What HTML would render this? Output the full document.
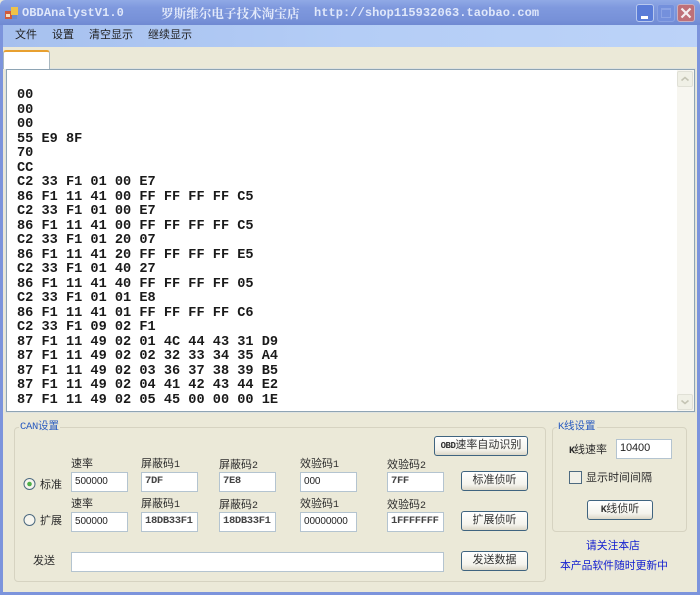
<!DOCTYPE html>
<html><head><meta charset="utf-8">
<style>
html,body{margin:0;padding:0;width:700px;height:595px;overflow:hidden;background:#ebe9d8}
body{position:relative;font-family:"Liberation Sans","Noto Sans CJK SC",sans-serif;font-size:12px;color:#222}
.a{position:absolute;white-space:nowrap}
.lb{position:absolute;white-space:nowrap;font-size:11px;line-height:14px;color:#2c2c2c;margin-top:1px}
.lb b{font-weight:normal;font-size:10px;font-family:"Liberation Mono",monospace}
.in{position:absolute;box-sizing:border-box;background:#fff;border:1px solid #b4c4d0;height:20px;font:bold 10.5px/17px "Liberation Mono",monospace;color:#444;padding-left:3px;letter-spacing:-.35px}
.in.n{font:normal 10px/17px "Liberation Sans",sans-serif;letter-spacing:-.1px;color:#222;padding-left:3px}
.btn{position:absolute;box-sizing:border-box;height:20px;width:67px;border:1px solid #3f6480;border-radius:3px;background:linear-gradient(#fff,#f4f3ec 70%,#dcd8c8);text-align:center;font-size:11px;line-height:17px;color:#333;white-space:nowrap}
.btn b{font:bold 9px "Liberation Mono",monospace;letter-spacing:-.5px}
.gb{position:absolute;box-sizing:border-box;border:1px solid #d6d3c1;border-radius:4px}
.gt{position:absolute;background:#ebe9d8;color:#2a5cc0;font-size:10.5px;line-height:14px;padding:0 1px;white-space:nowrap}
.gt b{font:normal 10.5px "Liberation Mono",monospace;letter-spacing:-.3px}
.out{position:absolute;left:17px;top:89px;font:bold 13.6px/14.52px "Liberation Mono",monospace;color:#1a1a1a;white-space:pre;margin:0}
</style></head><body>
<!-- title bar -->
<div class="a" style="left:0;top:0;width:700px;height:25px;background:linear-gradient(#90a9e6,#7f99de 30%,#7791d8 80%,#6f89d2);border-radius:5px 5px 0 0"></div>
<svg class="a" style="left:5px;top:6px" width="14" height="15"><rect x="0" y="5" width="7" height="8" fill="#cf5a3c"/><rect x="6" y="1" width="7" height="8" fill="#eec24a"/><rect x="1" y="8" width="4" height="3" fill="#f5e0c0"/><rect x="7" y="9" width="5" height="4" fill="#6a8ad0"/></svg>
<div class="a" style="left:22px;top:6px;font:bold 12px/14px 'Liberation Mono',monospace;color:#dfe7fa;letter-spacing:.08px">OBDAnalystV1.0</div>
<div class="a" style="left:161px;top:5px;font-size:12.6px;line-height:16px;font-weight:bold;color:#e2e9fa;font-family:'Noto Serif CJK SC','Noto Sans CJK SC',serif">罗斯维尔电子技术淘宝店</div>
<div class="a" style="left:314px;top:6px;font:bold 12px/14px 'Liberation Mono',monospace;color:#dfe7fa;letter-spacing:.06px">http://shop115932063.taobao.com</div>
<div class="a" style="left:636px;top:4px;width:18px;height:18px;box-sizing:border-box;background:#5a7cd8;border:1px solid #b8c8ee;border-radius:3px"><div class="a" style="left:4px;top:11px;width:7px;height:3px;background:#fff"></div></div>
<div class="a" style="left:657px;top:4px;width:18px;height:18px;box-sizing:border-box;background:#7490dc;border:1px solid #8aa2e2;border-radius:3px"><div class="a" style="left:3px;top:3px;width:10px;height:10px;box-sizing:border-box;border:1px solid #8ba3e4;border-top-width:2px"></div></div>
<div class="a" style="left:677px;top:4px;width:18px;height:18px;box-sizing:border-box;background:#bf7078;border:1px solid #c8b0c0;border-radius:3px"><svg width="16" height="16" style="display:block"><path d="M3.5 3.5L12.5 12.5M12.5 3.5L3.5 12.5" stroke="#f4eef0" stroke-width="2.2"/></svg></div>
<!-- menu -->
<div class="a" style="left:0;top:25px;width:700px;height:22px;background:linear-gradient(90deg,#a6c0ee,#b4cdf6 50%,#bcd3f8)"></div>
<div class="a" style="left:15px;top:28px;font-size:11px;line-height:15px;color:#222">文件</div>
<div class="a" style="left:52px;top:28px;font-size:11px;line-height:15px;color:#222">设置</div>
<div class="a" style="left:89px;top:28px;font-size:11px;line-height:15px;color:#222">清空显示</div>
<div class="a" style="left:148px;top:28px;font-size:11px;line-height:15px;color:#222">继续显示</div>
<!-- tab -->
<div class="a" style="left:3px;top:50px;width:47px;height:19px;box-sizing:border-box;background:#fff;border:1px solid #a9b8c0;border-bottom:0;border-top:2px solid #e8a030;border-radius:3px 3px 0 0;z-index:2"></div>
<!-- text area -->
<div class="a" style="left:6px;top:69px;width:689px;height:343px;box-sizing:border-box;background:#fff;border:1px solid #8ea4b4;box-shadow:0 0 0 1px #dfe3e0"></div>
<pre class="out">00
00
00
55 E9 8F
70
CC
C2 33 F1 01 00 E7
86 F1 11 41 00 FF FF FF FF C5
C2 33 F1 01 00 E7
86 F1 11 41 00 FF FF FF FF C5
C2 33 F1 01 20 07
86 F1 11 41 20 FF FF FF FF E5
C2 33 F1 01 40 27
86 F1 11 41 40 FF FF FF FF 05
C2 33 F1 01 01 E8
86 F1 11 41 01 FF FF FF FF C6
C2 33 F1 09 02 F1
87 F1 11 49 02 01 4C 44 43 31 D9
87 F1 11 49 02 02 32 33 34 35 A4
87 F1 11 49 02 03 36 37 38 39 B5
87 F1 11 49 02 04 41 42 43 44 E2
87 F1 11 49 02 05 45 00 00 00 1E</pre>
<!-- scrollbar -->
<div class="a" style="left:677px;top:70px;width:17px;height:341px;background:#f7f6f0"></div>
<div class="a" style="left:677px;top:71px;width:16px;height:16px;box-sizing:border-box;background:#f0f0e6;border:1px solid #e0e0d6;border-radius:2px"><svg width="14" height="14" style="display:block"><path d="M3.5 8.5L7 5.5L10.5 8.5" fill="none" stroke="#c4c4b4" stroke-width="1.6"/></svg></div>
<div class="a" style="left:677px;top:394px;width:16px;height:16px;box-sizing:border-box;background:#f0f0e6;border:1px solid #e0e0d6;border-radius:2px"><svg width="14" height="14" style="display:block"><path d="M3.5 5.5L7 8.5L10.5 5.5" fill="none" stroke="#c4c4b4" stroke-width="1.6"/></svg></div>
<!-- window borders -->
<div class="a" style="left:0;top:25px;width:3px;height:570px;background:#7c94dc"></div>
<div class="a" style="left:697px;top:25px;width:3px;height:570px;background:#7c94dc"></div>
<div class="a" style="left:0;top:592px;width:700px;height:3px;background:#7c94dc"></div>
<!-- CAN group -->
<div class="gb" style="left:14px;top:427px;width:532px;height:155px"></div>
<div class="gt" style="left:19px;top:419px"><b>CAN</b>设置</div>
<div class="btn" style="left:434px;top:436px;width:94px"><b>OBD</b>速率自动识别</div>
<!-- Row 1 labels -->
<div class="lb" style="left:71px;top:456px">速率</div>
<div class="lb" style="left:141px;top:456px">屏蔽码<b>1</b></div>
<div class="lb" style="left:219px;top:457px">屏蔽码<b>2</b></div>
<div class="lb" style="left:300px;top:456px">效验码<b>1</b></div>
<div class="lb" style="left:387px;top:457px">效验码<b>2</b></div>
<div class="in n" style="left:71px;top:472px;width:57px">500000</div>
<div class="in" style="left:141px;top:472px;width:57px">7DF</div>
<div class="in" style="left:219px;top:472px;width:57px">7E8</div>
<div class="in n" style="left:300px;top:472px;width:57px">000</div>
<div class="in" style="left:387px;top:472px;width:57px">7FF</div>
<div class="btn" style="left:461px;top:471px">标准侦听</div>
<!-- Row 2 -->
<div class="lb" style="left:71px;top:496px">速率</div>
<div class="lb" style="left:141px;top:496px">屏蔽码<b>1</b></div>
<div class="lb" style="left:219px;top:497px">屏蔽码<b>2</b></div>
<div class="lb" style="left:300px;top:496px">效验码<b>1</b></div>
<div class="lb" style="left:387px;top:497px">效验码<b>2</b></div>
<div class="in n" style="left:71px;top:512px;width:57px">500000</div>
<div class="in" style="left:141px;top:512px;width:57px">18DB33F1</div>
<div class="in" style="left:219px;top:512px;width:57px">18DB33F1</div>
<div class="in n" style="left:300px;top:512px;width:57px">00000000</div>
<div class="in" style="left:387px;top:512px;width:57px">1FFFFFFF</div>
<div class="btn" style="left:461px;top:511px">扩展侦听</div>
<!-- radios -->
<svg class="a" style="left:23px;top:477px" width="14" height="14"><circle cx="6.5" cy="7" r="5.5" fill="#f6f5ee" stroke="#4d6a80"/><circle cx="6.5" cy="7" r="2.3" fill="#4fb04a"/></svg>
<div class="lb" style="left:40px;top:477px">标准</div>
<svg class="a" style="left:23px;top:513px" width="14" height="14"><circle cx="6.5" cy="7" r="5.5" fill="#f6f5ee" stroke="#4d6a80"/></svg>
<div class="lb" style="left:40px;top:513px">扩展</div>
<!-- send -->
<div class="lb" style="left:33px;top:553px">发送</div>
<div class="in" style="left:71px;top:552px;width:373px"></div>
<div class="btn" style="left:461px;top:551px">发送数据</div>
<!-- K group -->
<div class="gb" style="left:552px;top:427px;width:135px;height:105px"></div>
<div class="gt" style="left:557px;top:419px"><b>K</b>线设置</div>
<div class="lb" style="left:569px;top:442px"><b style="letter-spacing:-1px;font-weight:bold">K</b>线速率</div>
<div class="in n" style="left:616px;top:439px;width:56px;font-size:11px">10400</div>
<div class="a" style="left:569px;top:471px;width:13px;height:13px;box-sizing:border-box;background:#f1f0e8;border:1px solid #4d6a80"></div>
<div class="lb" style="left:586px;top:470px">显示时间间隔</div>
<div class="btn" style="left:587px;top:500px;width:66px"><b style="font-size:10px">K</b>线侦听</div>
<div class="a" style="left:586px;top:539px;font-size:10.8px;line-height:14px;color:#1420d0">请关注本店</div>
<div class="a" style="left:560px;top:559px;font-size:10.8px;line-height:14px;color:#1420d0">本产品软件随时更新中</div>
</body></html>
